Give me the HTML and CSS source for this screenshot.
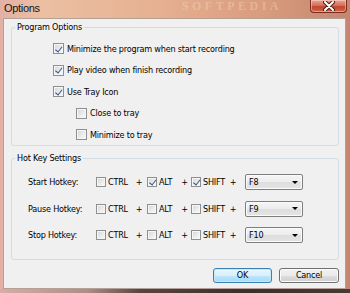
FILE: index.html
```html
<!DOCTYPE html>
<html lang="en">
<head>
  <meta charset="UTF-8">
  <title>Options</title>
  <link rel="stylesheet" href="styles.css">
</head>
<body>

  <div class="window">
    <div class="titlebar">
      <span class="title">Options</span>
      <span class="watermark">SOFTPEDIA</span>
      <button class="close-btn" title="Close">
        <svg width="14" height="10" viewBox="0 0 14 10">
          <path d="M3 1 L11 9 M11 1 L3 9" stroke="#4a2018" stroke-width="4" stroke-linecap="round" />
          <path d="M3 1 L11 9 M11 1 L3 9" stroke="#ffffff" stroke-width="2" stroke-linecap="round" />
        </svg>
      </button>
    </div>

    <div class="client">
      <fieldset class="group group-program">
        <legend>Program Options</legend>
        <label class="check"><span class="box checked"></span>Minimize the program when start recording</label>
        <label class="check"><span class="box checked"></span>Play video when finish recording</label>
        <label class="check"><span class="box checked"></span>Use Tray Icon</label>
        <label class="check sub"><span class="box"></span>Close to tray</label>
        <label class="check sub"><span class="box"></span>Minimize to tray</label>
      </fieldset>

      <fieldset class="group group-hotkey">
        <legend>Hot Key Settings</legend>

        <div class="hotkey-row">
          <span class="hk-label">Start Hotkey:</span>
          <span class="key"><span class="box small"></span>CTRL</span>
          <span class="plus">+</span>
          <span class="key"><span class="box small checked"></span>ALT</span>
          <span class="plus">+</span>
          <span class="key"><span class="box small checked"></span>SHIFT</span>
          <span class="plus">+</span>
          <div class="combo"><span>F8</span><i class="arrow"></i></div>
        </div>

        <div class="hotkey-row">
          <span class="hk-label">Pause Hotkey:</span>
          <span class="key"><span class="box small"></span>CTRL</span>
          <span class="plus">+</span>
          <span class="key"><span class="box small"></span>ALT</span>
          <span class="plus">+</span>
          <span class="key"><span class="box small"></span>SHIFT</span>
          <span class="plus">+</span>
          <div class="combo"><span>F9</span><i class="arrow"></i></div>
        </div>

        <div class="hotkey-row">
          <span class="hk-label">Stop Hotkey:</span>
          <span class="key"><span class="box small"></span>CTRL</span>
          <span class="plus">+</span>
          <span class="key"><span class="box small"></span>ALT</span>
          <span class="plus">+</span>
          <span class="key"><span class="box small"></span>SHIFT</span>
          <span class="plus">+</span>
          <div class="combo"><span>F10</span><i class="arrow"></i></div>
        </div>
      </fieldset>

      <div class="actions">
        <button class="btn btn-default">OK</button>
        <button class="btn">Cancel</button>
      </div>
    </div>

    <div class="frame-bottom"></div>
  </div>

</body>
</html>
```

FILE: styles.css
```css
body {
  margin: 0;
  font-family: 'DejaVu Sans Condensed', 'Liberation Sans', Arial, sans-serif;
  font-size: 9px;
  letter-spacing: -0.2px;
  color: #000;
}

.window {
  width: 350px;
  height: 293px;
  display: flex;
  flex-direction: column;
  /* aero glass frame tinted by the wallpaper */
  background: linear-gradient(to right, #e4b0a6 0%, #ecbfa2 12%, #e6b092 45%, #d99c7c 75%, #c48670 100%);
}

.titlebar {
  height: 18px;
  display: flex;
  align-items: flex-start;
  flex-shrink: 0;
}

.title {
  padding: 2px 0 0 4px;
  font-family: 'Liberation Sans', Arial, sans-serif;
  font-size: 11px;
  letter-spacing: -0.3px;
  line-height: 12px;
  color: #141414;
}

.watermark {
  margin-left: 142px;
  font-family: 'Liberation Serif', serif;
  font-size: 12px;
  font-weight: bold;
  letter-spacing: 3.5px;
  line-height: 13px;
  color: rgba(255, 236, 220, 0.3);
}

.close-btn {
  margin-left: auto;
  margin-right: 3px;
  width: 37px;
  height: 13px;
  padding: 0;
  border: 1px solid #7a2a1e;
  border-top: none;
  border-radius: 0 0 4px 4px;
  background: linear-gradient(#e9a493 0%, #d4705a 45%, #c0452e 55%, #d2664a 100%);
  box-shadow: inset 0 0 0 1px rgba(255, 220, 210, 0.5);
  display: flex;
  justify-content: center;
  align-items: center;
}

.client {
  flex: 1;
  margin: 0 4px 0 3px;
  border: 1px solid #b3a097;
  background: #f0f0f0;
  padding: 2px 6px 0 7px;
  display: flex;
  flex-direction: column;
}

.frame-bottom {
  height: 4px;
  flex-shrink: 0;
  background: linear-gradient(to right, #d9aca6 0%, #b08c86 25%, #5a4440 40%, #3e2e2c 70%, #4a3834 100%);
}

.group {
  margin: 0;
  padding: 5px 0 0 0;
  border: 1px solid #d2dce3;
  border-radius: 3px;
  min-width: 0;
  box-sizing: border-box;
}

.group legend {
  padding: 0 2px;
  margin-left: 3px;
  line-height: 12px;
}

.group-program {
  height: 125px;
}

.group-hotkey {
  height: 108px;
  margin-top: 6px;
}

.check {
  display: flex;
  align-items: center;
  gap: 3px;
  height: 21.5px;
  padding-left: 41px;
}

.check.sub {
  padding-left: 64px;
}

.box {
  width: 11px;
  height: 11px;
  box-sizing: border-box;
  border: 1px solid #8e8f8f;
  background: linear-gradient(135deg, #d2d4d8 0%, #eceded 60%, #fafafa 100%);
  box-shadow: inset 0 0 0 1px #f6f6f6;
  flex-shrink: 0;
  position: relative;
}

.box.small {
  width: 10px;
  height: 10px;
}

.box.checked::after {
  content: '';
  position: absolute;
  left: 3px;
  top: 0.5px;
  width: 2.5px;
  height: 5.5px;
  border: solid #3a5296;
  border-width: 0 1.5px 1.5px 0;
  transform: rotate(38deg);
}

.box.small.checked::after {
  left: 2.5px;
  top: 0;
}

.hotkey-row {
  display: grid;
  grid-template-columns: 68px 35px 16px 31px 13px 36px 12px 64px;
  align-items: center;
  height: 26.5px;
  padding-left: 16px;
}

.key {
  display: flex;
  align-items: center;
  gap: 2px;
}

.plus {
  text-align: center;
}

.combo {
  margin-left: 6px;
  width: 58px;
  height: 16px;
  box-sizing: border-box;
  border: 1px solid #7e7e7e;
  border-radius: 2px;
  background: linear-gradient(#f6f6f6 0%, #ececec 50%, #dedede 51%, #e4e4e4 100%);
  box-shadow: inset 0 0 0 1px #fbfbfb;
  display: flex;
  align-items: center;
  justify-content: space-between;
  padding: 0 4px 0 3px;
}

.arrow {
  width: 0;
  height: 0;
  border-left: 3px solid transparent;
  border-right: 3px solid transparent;
  border-top: 3px solid #000;
}

.actions {
  margin-top: 8px;
  display: flex;
  justify-content: flex-end;
  gap: 7px;
}

.btn {
  width: 60px;
  height: 15px;
  padding: 0;
  font-family: inherit;
  font-size: 9px;
  letter-spacing: inherit;
  line-height: 13px;
  color: #000;
  border: 1px solid #707070;
  border-radius: 3px;
  background: linear-gradient(#f2f2f2 0%, #ebebeb 50%, #dddddd 51%, #cfcfcf 100%);
  box-shadow: inset 0 0 0 1px #fbfbfb;
}

.btn-default {
  width: 59px;
  border-color: #3c7fb1;
  background: linear-gradient(#eaf6fd 0%, #d9f0fc 50%, #bee6fd 51%, #a7d9f5 100%);
  box-shadow: inset 0 0 0 1px #c8e8f8;
}
```
